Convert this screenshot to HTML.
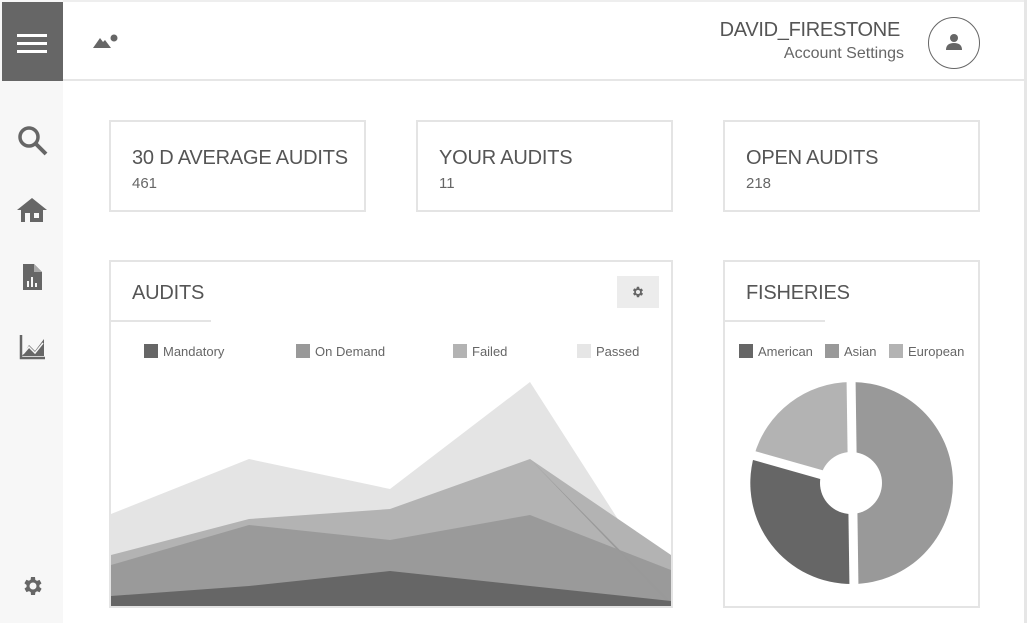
<!DOCTYPE html>
<html><head><style>
*{margin:0;padding:0;box-sizing:border-box}
body{width:1027px;height:623px;background:#fff;font-family:"Liberation Sans",sans-serif;color:#555;position:relative;overflow:hidden}
.abs{position:absolute}
.card{position:absolute;border:2px solid #e4e4e4;background:#fff}
.ct{position:absolute;left:21px;top:25px;font-size:20px;color:#555;letter-spacing:-0.2px}
.cv{position:absolute;left:21px;top:53px;font-size:15px;color:#666}
.lg{position:absolute;font-size:13px;color:#666}
.lg i{display:inline-block;width:14px;height:14px;vertical-align:-2px;margin-right:5px}
</style></head><body>
<div class="abs" style="left:0;top:0;width:1027px;height:81px;border-bottom:2px solid #e6e6e6;border-top:2px solid #eee"></div>
<div class="abs" style="right:0;top:0;width:3px;height:623px;background:#e6e6e6"></div>
<div class="abs" style="left:0;top:0;width:63px;height:623px;background:#f7f7f7"></div>
<div class="abs" style="left:2px;top:2px;width:61px;height:79px;background:#666"></div>
<div class="abs" style="left:17px;top:34px;width:30px;height:3px;background:#fff;box-shadow:0 8px 0 #fff,0 16px 0 #fff"></div>
<svg class="abs" style="left:92px;top:32px" width="28" height="18"><path d="M1 16 L8 6 L11 10 L13 8 L19 16Z" fill="#666"/><circle cx="22" cy="6" r="3.5" fill="#666"/></svg>
<div class="abs" style="left:700px;top:19px;width:200px;text-align:right;font-size:20px;color:#555;letter-spacing:-0.3px">DAVID_FIRESTONE</div>
<div class="abs" style="left:700px;top:45px;width:204px;text-align:right;font-size:16px;color:#666">Account Settings</div>
<div class="abs" style="left:928px;top:17px;width:52px;height:52px;border:1.5px solid #666;border-radius:50%"></div>
<svg class="abs" style="left:944px;top:32px" width="20" height="20"><circle cx="10" cy="6" r="4" fill="#666"/><path d="M2 18 Q2 11 10 11 Q18 11 18 18Z" fill="#666"/></svg>
<svg class="abs" style="left:16px;top:124px" width="34" height="34"><circle cx="13" cy="13" r="9" stroke="#666" stroke-width="3.5" fill="none"/><path d="M19 19 L30 30" stroke="#666" stroke-width="4"/></svg>
<svg class="abs" style="left:17px;top:196px" width="32" height="28"><path d="M15 2 L30 14 L26 14 L26 26 L4 26 L4 14 L0 14Z" fill="#666"/><rect x="8" y="17" width="5" height="9" fill="#f7f7f7"/><rect x="17" y="17" width="5" height="5" fill="#f7f7f7"/></svg>
<svg class="abs" style="left:21px;top:263px" width="24" height="28"><path d="M2 1 L13 1 L21 9 L21 27 L2 27Z" fill="#666"/><path d="M13 1 L13 9 L21 9" fill="#aaa"/><rect x="6" y="18" width="2" height="6" fill="#f7f7f7"/><rect x="10" y="14" width="2" height="10" fill="#f7f7f7"/><rect x="14" y="20" width="2" height="4" fill="#f7f7f7"/></svg>
<svg class="abs" style="left:19px;top:334px" width="28" height="26"><path d="M2 1 L2 24 L26 24" stroke="#666" stroke-width="2.5" fill="none"/><path d="M3 22 L10 11 L16 17 L25 5 L25 22Z" fill="#666"/><path d="M4 20 L10 13 L16 19 L24 9" stroke="#f7f7f7" stroke-width="1.5" fill="none"/></svg>
<svg class="abs" style="left:21px;top:574px" width="24" height="24" viewBox="0 0 24 24"><path fill="#666" d="M19.4 13a7.5 7.5 0 000-2l2.1-1.6-2-3.5-2.5 1a7 7 0 00-1.7-1L15 3h-4l-.4 2.7a7 7 0 00-1.7 1l-2.5-1-2 3.5L6.6 11a7.5 7.5 0 000 2l-2.1 1.6 2 3.5 2.5-1a7 7 0 001.7 1L11 21h4l.4-2.7a7 7 0 001.7-1l2.5 1 2-3.5zM13 15.5a3.5 3.5 0 110-7 3.5 3.5 0 010 7z" transform="translate(-1 0)"/></svg>
<div class="card" style="left:109px;top:120px;width:257px;height:92px"><div class="ct">30 D AVERAGE AUDITS</div><div class="cv">461</div></div>
<div class="card" style="left:416px;top:120px;width:257px;height:92px"><div class="ct">YOUR AUDITS</div><div class="cv">11</div></div>
<div class="card" style="left:723px;top:120px;width:257px;height:92px"><div class="ct">OPEN AUDITS</div><div class="cv">218</div></div>
<div class="card" style="left:109px;top:260px;width:564px;height:348px">
<div class="ct" style="top:20px">AUDITS</div>
<div class="abs" style="left:0;top:58px;width:100px;height:2px;background:#e4e4e4"></div>
<div class="abs" style="left:506px;top:14px;width:42px;height:32px;background:#ececec"></div>
<svg class="abs" style="left:520px;top:23px" width="14" height="14" viewBox="0 0 24 24"><path fill="#666" d="M19.4 13a7.5 7.5 0 000-2l2.1-1.6-2-3.5-2.5 1a7 7 0 00-1.7-1L15 3h-4l-.4 2.7a7 7 0 00-1.7 1l-2.5-1-2 3.5L6.6 11a7.5 7.5 0 000 2l-2.1 1.6 2 3.5 2.5-1a7 7 0 001.7 1L11 21h4l.4-2.7a7 7 0 001.7-1l2.5 1 2-3.5zM13 15.5a3.5 3.5 0 110-7 3.5 3.5 0 010 7z" transform="translate(-1 0)"/></svg>
</div>
<div class="lg" style="left:144px;top:344px"><i style="background:#666"></i>Mandatory</div>
<div class="lg" style="left:296px;top:344px"><i style="background:#999"></i>On Demand</div>
<div class="lg" style="left:453px;top:344px"><i style="background:#b3b3b3"></i>Failed</div>
<div class="lg" style="left:577px;top:344px"><i style="background:#e6e6e6"></i>Passed</div>
<svg class="abs" style="left:0;top:0" width="1027" height="623">
<polygon points="111,514 249,459 390,489 530,382 671,602 671,606 111,606" fill="#e4e4e4"/>
<polygon points="111,555 249,519 390,509 530,459 671,555 671,606 111,606" fill="#b3b3b3"/>
<polygon points="530,459 671,602 671,606" fill="#999"/>
<polygon points="111,565 249,525 390,540 530,515 671,570 671,606 111,606" fill="#999" opacity="0.95"/>
<polygon points="111,596 249,586 390,571 530,586 671,601 671,606 111,606" fill="#666"/>
</svg>
<div class="card" style="left:723px;top:260px;width:257px;height:348px">
<div class="ct" style="top:20px">FISHERIES</div>
<div class="abs" style="left:0;top:58px;width:100px;height:2px;background:#e4e4e4"></div>
</div>
<div class="lg" style="left:739px;top:344px"><i style="background:#666"></i>American</div>
<div class="lg" style="left:825px;top:344px"><i style="background:#999"></i>Asian</div>
<div class="lg" style="left:889px;top:344px"><i style="background:#b3b3b3"></i>European</div>
<svg class="abs" style="left:0;top:0" width="1027" height="623">
<path d="M851 382 A101 101 0 0 1 853 584 L851 483 Z" fill="#999"/>
<path d="M853 584 A101 101 0 0 1 754 456 L851 483 Z" fill="#666"/>
<path d="M754 456 A101 101 0 0 1 851 382 L851 483 Z" fill="#b3b3b3"/>
<path d="M851 375 L854 590" stroke="#fff" stroke-width="9"/>
<path d="M851 483 L745 453" stroke="#fff" stroke-width="9"/>
<circle cx="851" cy="483" r="31" fill="#fff"/>
</svg>
</body></html>
